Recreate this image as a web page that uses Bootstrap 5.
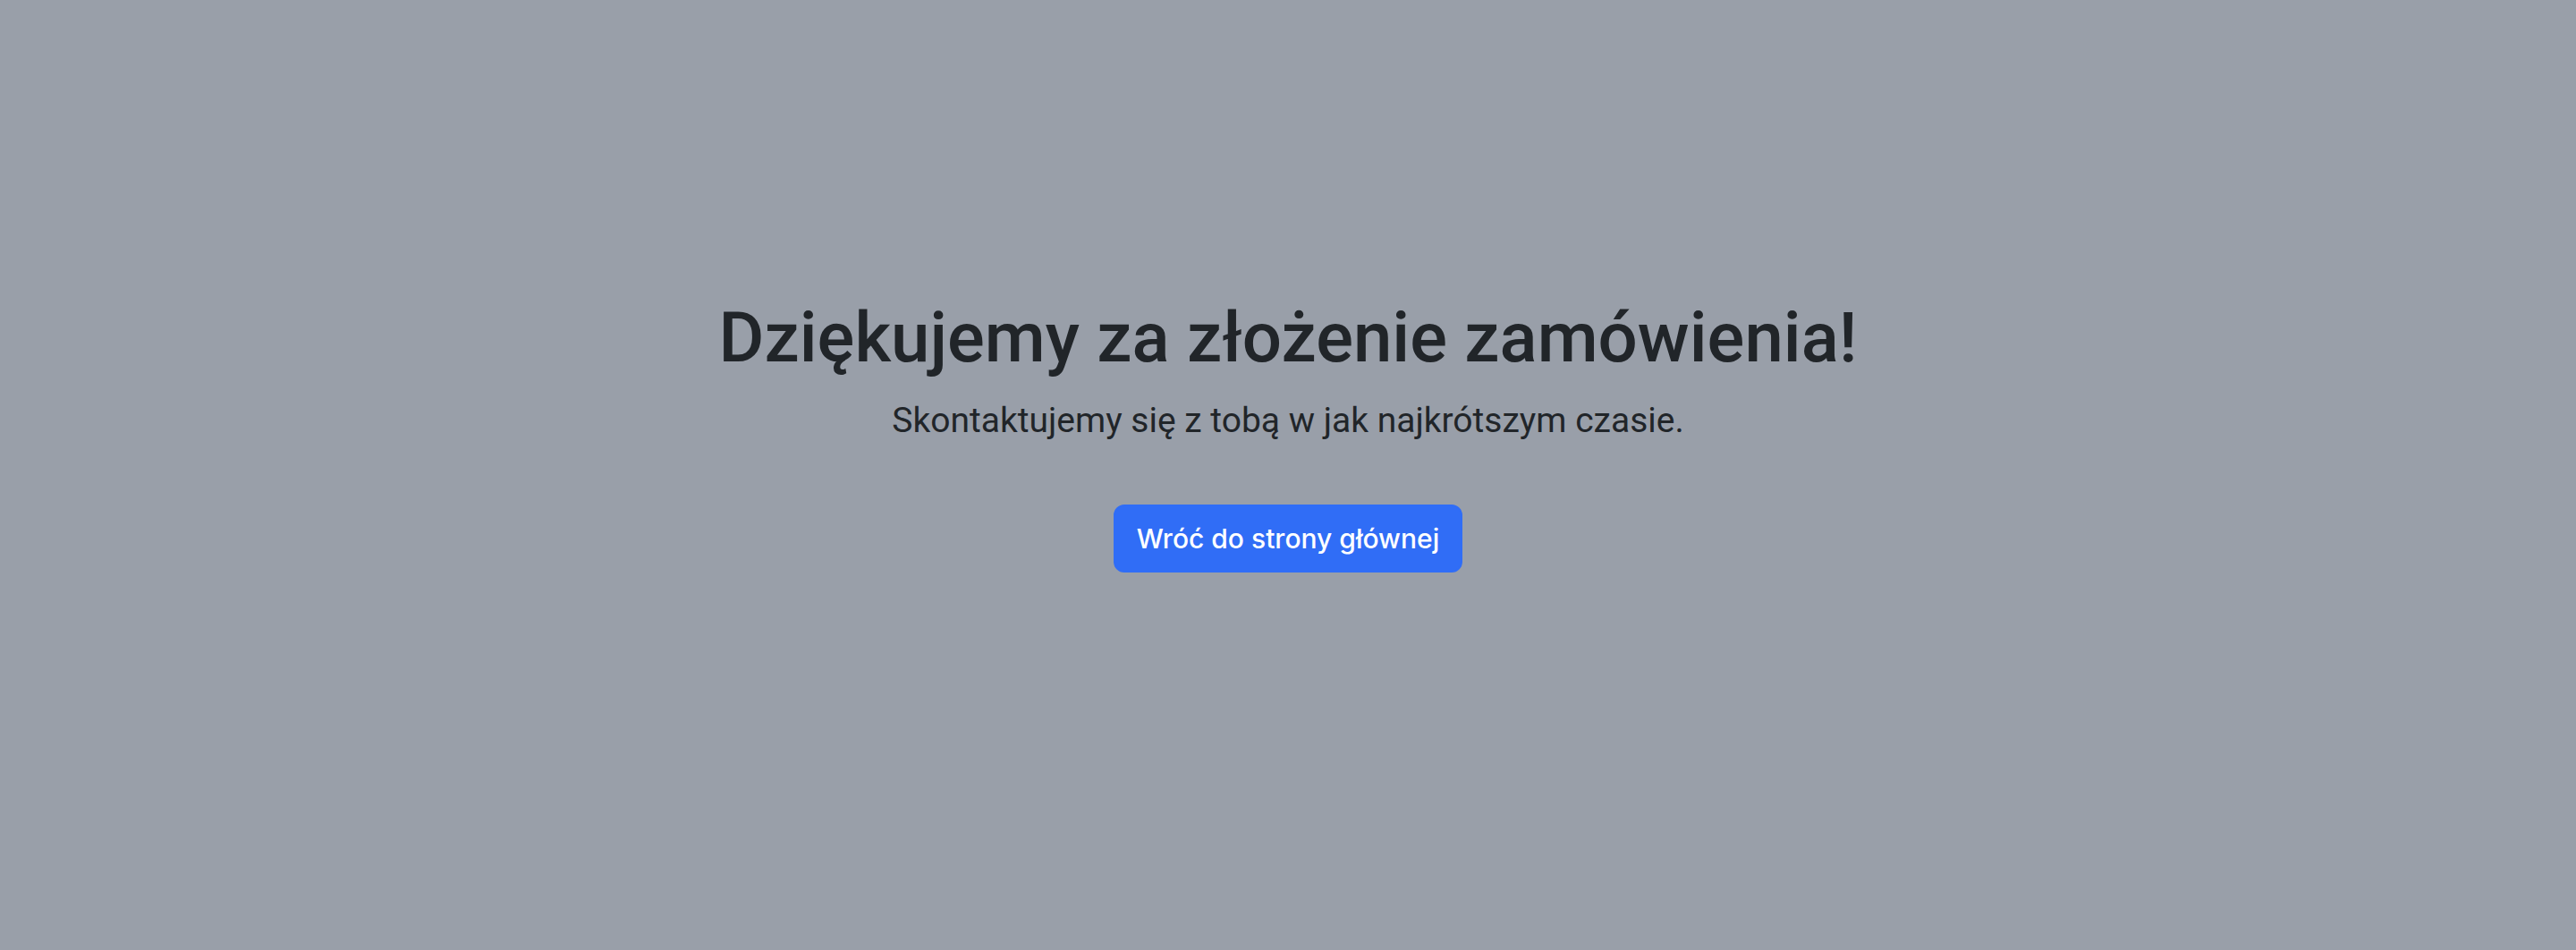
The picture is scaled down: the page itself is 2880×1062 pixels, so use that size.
<!DOCTYPE html>
<html lang="pl">
<head>
<meta charset="utf-8">
<meta name="viewport" content="width=device-width, initial-scale=1">
<title>Dziękujemy za złożenie zamówienia!</title>
<link href="https://cdn.jsdelivr.net/npm/bootstrap@5.3.0/dist/css/bootstrap.min.css" rel="stylesheet">
<style>
html { font-size: 32px; }
body { background-color: #999fa9; color: #212529; font-family: Roboto, "Liberation Sans", sans-serif; }
.thanks { padding-bottom: 94px; }
.thanks h1 { font-size: 78px; line-height: 100px; margin-bottom: 12px; }
.thanks .lead { font-size: 39px; line-height: 60px; font-weight: 400; }
.btn-home { --bs-btn-bg: #306df6; --bs-btn-border-color: #306df6; --bs-btn-border-width: 2px; --bs-btn-border-radius: 12px; --bs-btn-font-weight: 500; --bs-btn-font-size: 30px; --bs-btn-line-height: 48px; --bs-btn-font-family: Inter, "Liberation Sans", sans-serif; }
</style>
</head>
<body>
<main class="thanks min-vh-100 d-flex flex-column justify-content-center align-items-center text-center">
  <h1>Dziękujemy za złożenie zamówienia!</h1>
  <p class="lead mb-3 pb-3">Skontaktujemy się z tobą w jak najkrótszym czasie.</p>
  <a class="btn btn-primary btn-home" href="/">Wróć do strony głównej</a>
</main>
<script src="https://cdn.jsdelivr.net/npm/bootstrap@5.3.0/dist/js/bootstrap.bundle.min.js"></script>
</body>
</html>
